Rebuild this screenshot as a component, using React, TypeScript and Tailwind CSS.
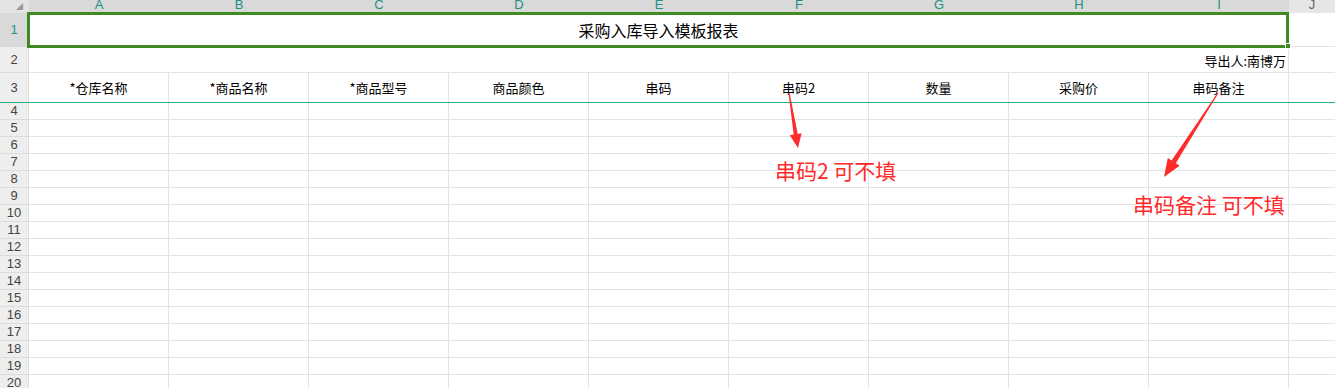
const cols = ["A", "B", "C", "D", "E", "F", "G", "H", "I"];
const heads = ["*仓库名称", "*商品名称", "*商品型号", "商品颜色", "串码", "串码2", "数量", "采购价", "串码备注"];
const rest = Array.from({ length: 17 }, (_, i) => i + 4);

const num = "flex items-center justify-center font-['Liberation_Sans',Arial,sans-serif] text-[13px]";

const App = () => {
  return (
    <div className="relative h-[388px] w-[1335px] overflow-hidden bg-white font-['Noto_Sans_CJK_SC','Noto_Sans',sans-serif] text-black">
      {/* column letters */}
      <div className="flex h-[13px]">
        <div className="flex w-[29px] items-start justify-center bg-[#e4e4e4] pl-[10px]">
          <span className="mt-[3px] text-[7px] leading-none text-[#9a9a9a]">◢</span>
        </div>
        {cols.map((c) => (
          <div key={c} className={`${num} w-[140px] items-start bg-[#d9d9d9] text-[12px] leading-[10px] text-[#1d8f84]`}>
            {c}
          </div>
        ))}
        <div className={`${num} flex-1 items-start bg-[#e6e6e6] text-[12px] leading-[10px] text-[#666]`}>J</div>
      </div>

      {/* row 1 */}
      <div className="flex h-[34px]">
        <div className={`${num} w-[29px] border-r border-[#cfcfcf] bg-[#d9d9d9] text-[#1d8f84]`}>1</div>
        <div className="flex w-[1260px] items-center justify-center border-r border-b border-[#e2e2e2] text-[16px]">
          采购入库导入模板报表
        </div>
        <div className="flex-1 border-b border-[#e2e2e2]" />
      </div>

      {/* row 2 */}
      <div className="flex h-[26px]">
        <div className={`${num} w-[29px] border-r border-b border-[#dcdcdc] bg-[#eeeeee] text-[#444]`}>2</div>
        <div className="flex w-[1260px] items-end justify-end border-r border-b border-[#e2e2e2] pr-[2px] pb-[2px] text-[13px] leading-[18px]">
          导出人:南博万
        </div>
        <div className="flex-1 border-b border-[#e2e2e2]" />
      </div>

      {/* row 3 headers, freeze line below */}
      <div className="flex h-[30px] border-b border-[#22b47a]">
        <div className={`${num} w-[29px] border-r border-[#dcdcdc] bg-[#eeeeee] text-[#444]`}>3</div>
        {heads.map((h) => (
          <div key={h} className="flex w-[140px] items-center justify-center border-r border-[#e2e2e2] text-[13px]">
            {h}
          </div>
        ))}
        <div className="flex-1" />
      </div>

      {rest.map((r) => (
        <div key={r} className="flex h-[17px]">
          <div className={`${num} w-[29px] border-r border-b border-[#dcdcdc] bg-[#eeeeee] text-[#444]`}>{r}</div>
          {cols.map((c) => (
            <div key={c} className="w-[140px] border-r border-b border-[#e2e2e2]" />
          ))}
          <div className="flex-1 border-b border-[#e2e2e2]" />
        </div>
      ))}

      {/* selection frame on merged A1:I1 */}
      <div className="absolute top-[12px] left-[27px] h-[36px] w-[1262px] border-[3px] border-[#3f8a22]" />
      <div className="absolute top-[43px] left-[1285px] h-[6px] w-[6px] border border-white bg-[#3f8a22]" />

      {/* annotations */}
      <svg className="absolute top-0 left-0" width="1335" height="388" viewBox="0 0 1335 388">
        <polygon
          fill="#ff2a2a"
          points="788.5,93 793.7,134.5 789.8,135.2 798,148 801.6,133.2 797.7,133.9 789.6,93"
        />
        <polygon
          fill="#ff2a2a"
          points="1217.6,92.7 1171.6,160.5 1167.8,158.1 1164,177 1179.6,165.7 1175.8,163.3 1218.4,93.3"
        />
      </svg>
      <div className="absolute top-[156px] left-[775px] text-[21px] leading-[28px] whitespace-nowrap text-[#ff2a2a]">
        串码2 可不填
      </div>
      <div className="absolute top-[190px] left-[1133px] text-[21px] leading-[28px] whitespace-nowrap text-[#ff2a2a]">
        串码备注 可不填
      </div>
    </div>
  );
};

export default App;
